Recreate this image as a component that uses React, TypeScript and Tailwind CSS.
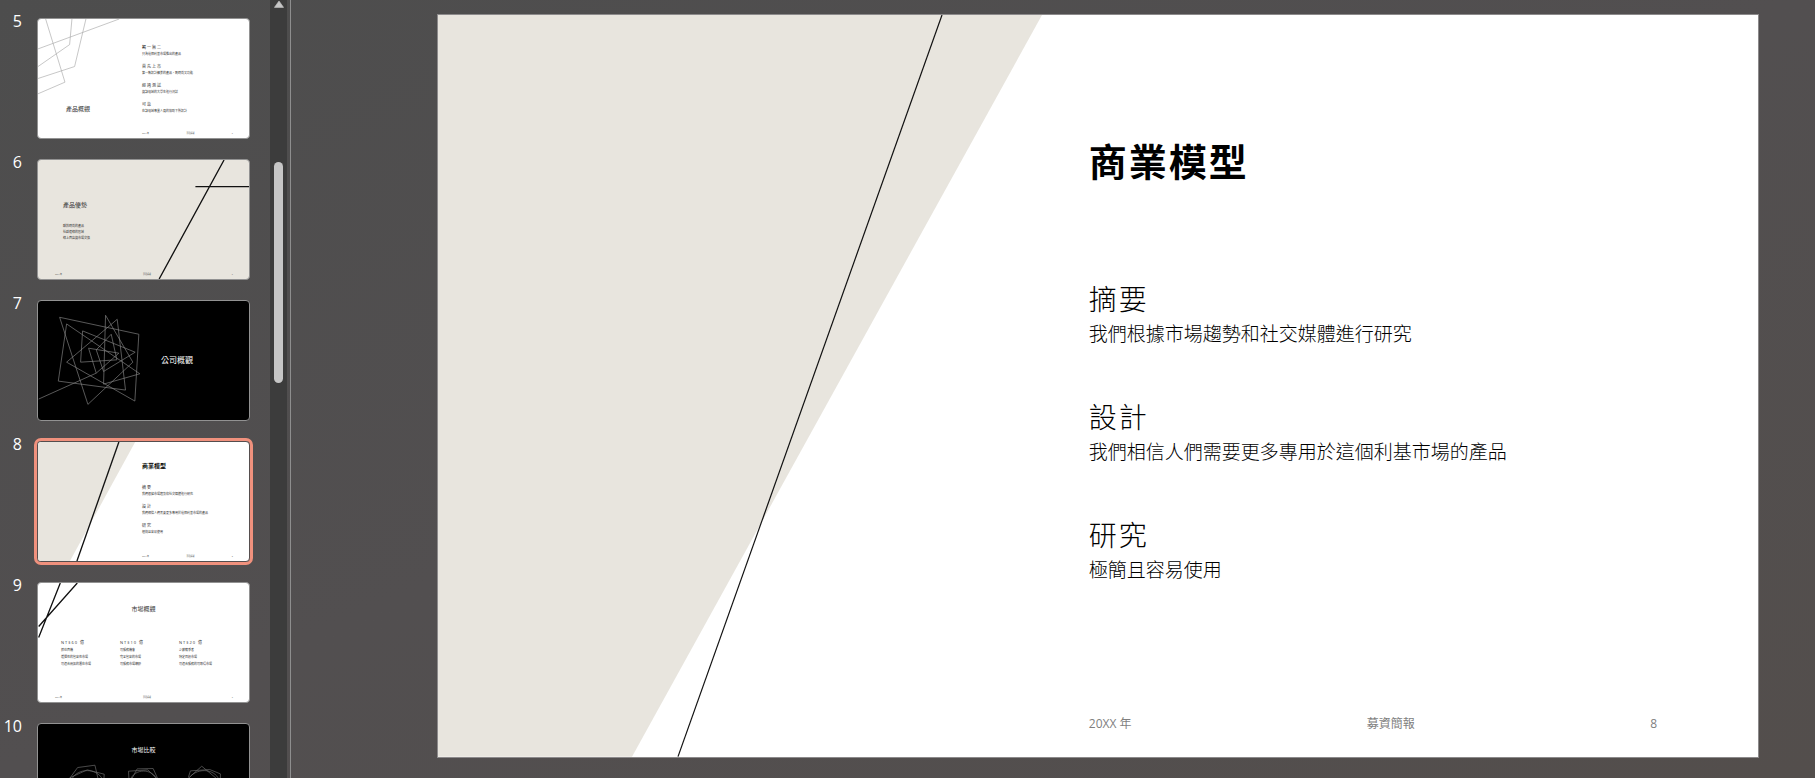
import { useState } from 'react';
import type { ReactNode } from 'react';
import { clsx } from 'clsx';

interface Point {
  title: string;
  text: string;
}

const MODEL: Point[] = [
  { title: '摘要', text: '我們根據市場趨勢和社交媒體進行研究' },
  { title: '設計', text: '我們相信人們需要更多專用於這個利基市場的產品' },
  { title: '研究', text: '極簡且容易使用' },
];

const PRODUCT: Point[] = [
  { title: '獨一無二', text: '只為這個利基市場推出的產品' },
  { title: '首先上市', text: '第一款設計精美的產品，既時尚又功能' },
  { title: '經過測試', text: '與該領域的大學生進行測試' },
  { title: '可靠', text: '在該領域專業人員的協助下所設計' },
];

const BENEFITS = ['酷炫時尚的產品', '社群連線的區域', '線上商店與市場交換'];

const MARKETS = [
  { amount: 'NT$60 億', lines: ['抓住商機', '選擇性的包容性市場', '可適合開拓的潛在市場'] },
  { amount: 'NT$10 億', lines: ['可服務機會', '完全包容的市場', '可服務市場總額'] },
  { amount: 'NT$20 億', lines: ['少數競爭者', '特定目標市場', '可適合服務的可取得市場'] },
];

const SLIDES: { no: number; title: string; dark?: boolean; beige?: boolean; body: ReactNode }[] = [
  { no: 5, title: '產品概觀', body: <ProductThumb /> },
  { no: 6, title: '產品優勢', beige: true, body: <BenefitsThumb /> },
  { no: 7, title: '公司概觀', dark: true, body: <CompanyThumb /> },
  { no: 8, title: '商業模型', body: <ModelThumb /> },
  { no: 9, title: '市場概觀', body: <MarketThumb /> },
  { no: 10, title: '市場比較', dark: true, body: <CompareThumb /> },
];

export default function App() {
  const [selected, setSelected] = useState(8);

  return (
    <div className="flex h-screen overflow-hidden bg-linear-to-br from-[#4d4d4d] via-[#524f50] to-[#534e4c] font-['Open_Sans','Noto_Sans_CJK_TC',sans-serif]">
      <nav aria-label="投影片" className="flex w-[291px] shrink-0 border-r border-[#8e8e8e]">
        <ol className="flex flex-1 flex-col gap-[15px] overflow-hidden pt-[13px]">
          {SLIDES.map((s) => (
            <li key={s.no} className="flex shrink-0 items-start gap-[15px]">
              <span className="w-[22px] text-right text-base leading-4 text-white">{s.no}</span>
              <button
                type="button"
                aria-label={s.title}
                aria-current={s.no === selected}
                onClick={() => setSelected(s.no)}
                className={clsx(
                  'relative mt-[5px] flex h-[121px] w-[213px] flex-col overflow-hidden rounded-[4px] border text-left',
                  s.dark ? 'bg-black text-white' : s.beige ? 'bg-[#e8e5de] text-[#333]' : 'bg-white text-[#333]',
                  s.no === selected ? 'border-[#554e4e] outline-3 outline-[#f0917d]' : 'border-[#929292]',
                )}
              >
                {s.body}
              </button>
            </li>
          ))}
        </ol>
        <ScrollBar />
        <div className="w-[3px]" />
      </nav>

      <main className="min-w-0 flex-1 pt-[14px] pr-[56px] pl-[146px]">
        <ModelSlide />
      </main>
    </div>
  );
}

function ScrollBar() {
  return (
    <div className="flex w-[17px] flex-col items-center bg-[#3c3c3c]">
      <svg viewBox="0 0 10 8" className="h-2 w-[10px]" aria-hidden="true">
        <path d="M5 1 9.6 7.4H.4Z" fill="#c6c6c6" stroke="#c6c6c6" strokeWidth=".6" strokeLinejoin="round" />
      </svg>
      <div className="mt-[154px] h-[221px] w-[9px] rounded-full bg-[#c6c6c6]" />
    </div>
  );
}

function ModelSlide() {
  return (
    <article className="relative flex aspect-video flex-col border border-[#8c8a8b] bg-white text-black">
      <svg viewBox="0 0 1320 743" preserveAspectRatio="none" className="absolute inset-0 h-full w-full" aria-hidden="true">
        <path d="M0 0H604L194 743H0Z" fill="#e8e5de" />
        <path d="M504 0 240 743" stroke="#111" strokeWidth="1.2" />
      </svg>
      <div className="relative ml-auto flex w-[50.7%] flex-1 flex-col pt-[122px]">
        <h1 className="text-[38px] leading-[48px] font-bold tracking-[2px]">商業模型</h1>
        <div className="mt-[94px] flex flex-col gap-12">
          {MODEL.map((p) => (
            <section key={p.title}>
              <h2 className="text-[28px] leading-[40px] font-light tracking-[2px]">{p.title}</h2>
              <p className="text-[19px] leading-[30px] font-light">{p.text}</p>
            </section>
          ))}
        </div>
        <footer className="mt-auto flex justify-between pr-[101px] pb-6 text-xs leading-[18px] text-[#7f7f7f]">
          <span>20XX 年</span>
          <span>募資簡報</span>
          <span>8</span>
        </footer>
      </div>
    </article>
  );
}

function Art({ children }: { children: ReactNode }) {
  return (
    <svg viewBox="0 0 634 358" preserveAspectRatio="none" fill="none" className="absolute inset-0 h-full w-full" aria-hidden="true">
      {children}
    </svg>
  );
}

function ThumbFooter({ no, half }: { no: number; half?: boolean }) {
  return (
    <span
      className={clsx(
        'relative mt-auto mb-[2px] flex justify-between pr-4 text-[2px] leading-[4px] text-[#555]',
        half ? 'pl-[104px]' : 'pl-[17px]',
      )}
    >
      <span>20XX 年</span>
      <span>募資簡報</span>
      <span>{no}</span>
    </span>
  );
}

function Points({ items }: { items: Point[] }) {
  return (
    <span className="flex flex-col gap-[7px]">
      {items.map((p) => (
        <span key={p.title} className="flex flex-col">
          <span className="text-[4px] leading-[6px] tracking-[1px]">{p.title}</span>
          <span className="text-[3px] leading-[6px]">{p.text}</span>
        </span>
      ))}
    </span>
  );
}

function ProductThumb() {
  return (
    <>
      <Art>
        <path
          d="M23 0 81 190 0 225M244 0 0 90M102 0 95 77 0 143M144 0 110 143 0 179"
          stroke="#aaa"
          strokeWidth="2"
        />
      </Art>
      <span className="relative flex pt-[26px]">
        <span className="w-[104px] pt-[60px] pl-7 text-[6px] leading-[8px]">產品概觀</span>
        <Points items={PRODUCT} />
      </span>
      <ThumbFooter no={5} half />
    </>
  );
}

function BenefitsThumb() {
  return (
    <>
      <Art>
        <path d="M559 0 364 358M473 80H634" stroke="#111" strokeWidth="4" />
      </Art>
      <span className="relative flex flex-col pt-[41px] pl-[25px]">
        <span className="text-[6px] leading-[8px]">產品優勢</span>
        <span className="mt-[14px] flex flex-col text-[3px] leading-[6px]">
          {BENEFITS.map((b) => (
            <span key={b}>{b}</span>
          ))}
        </span>
      </span>
      <ThumbFooter no={6} />
    </>
  );
}

function CompanyThumb() {
  return (
    <>
      <Art>
        <g stroke="#858585" strokeWidth="2">
          <path d="M65 49 303 100 291 301 86 184 238 55 263 268 61 241 86 69 306 219 197 250 203 43 285 184 150 311Z" />
          <path d="M128 184 134 90 292 154 197 212 175 147 220 100 237 177Z" />
          <path d="M2 295 175 217 243 157 152 142 175 217" />
        </g>
      </Art>
      <span className="relative pt-[54px] pl-[123px] text-[8px] leading-[10px]">公司概觀</span>
    </>
  );
}

function ModelThumb() {
  return (
    <>
      <Art>
        <path d="M0 0H292L96 358H0Z" fill="#e8e5de" />
        <path d="M243 0 117 358" stroke="#111" strokeWidth="4" />
      </Art>
      <span className="relative flex flex-col pt-5 pl-[104px]">
        <span className="mb-[15px] text-[6px] leading-[8px] font-bold text-black">商業模型</span>
        <Points items={MODEL} />
      </span>
      <ThumbFooter no={8} half />
    </>
  );
}

function MarketThumb() {
  return (
    <>
      <Art>
        <path d="M67 0 2 164M118 0 2 131" stroke="#111" strokeWidth="4" />
      </Art>
      <span className="relative flex flex-col pt-[22px]">
        <span className="text-center text-[6px] leading-[8px]">市場概觀</span>
        <span className="mt-[26px] grid grid-cols-3 pr-[11px] pl-[23px]">
          {MARKETS.map((m) => (
            <span key={m.amount} className="flex flex-col text-[3px] leading-[7px] whitespace-nowrap">
              <span className="mb-px text-[4px] tracking-[1px]">{m.amount}</span>
              {m.lines.map((l) => (
                <span key={l}>{l}</span>
              ))}
            </span>
          ))}
        </span>
      </span>
      <ThumbFooter no={9} />
    </>
  );
}

function CompareThumb() {
  return (
    <>
      <Art>
        <g stroke="#6e6e6e" strokeWidth="2">
          <path d="M92 168 119 131 171 124 184 180M95 162 148 138 199 151 197 180M102 165C120 132 175 132 193 165" />
          <path d="M274 180 272 142 330 138 364 172M280 168 298 135 346 134 360 165M276 170C290 132 344 132 360 170" />
          <path d="M446 168 492 127 546 172M452 160 458 141 516 137 548 150V180M450 168C472 130 530 132 544 168" />
        </g>
      </Art>
      <span className="relative pt-[22px] text-center text-[6px] leading-[8px]">市場比較</span>
    </>
  );
}
